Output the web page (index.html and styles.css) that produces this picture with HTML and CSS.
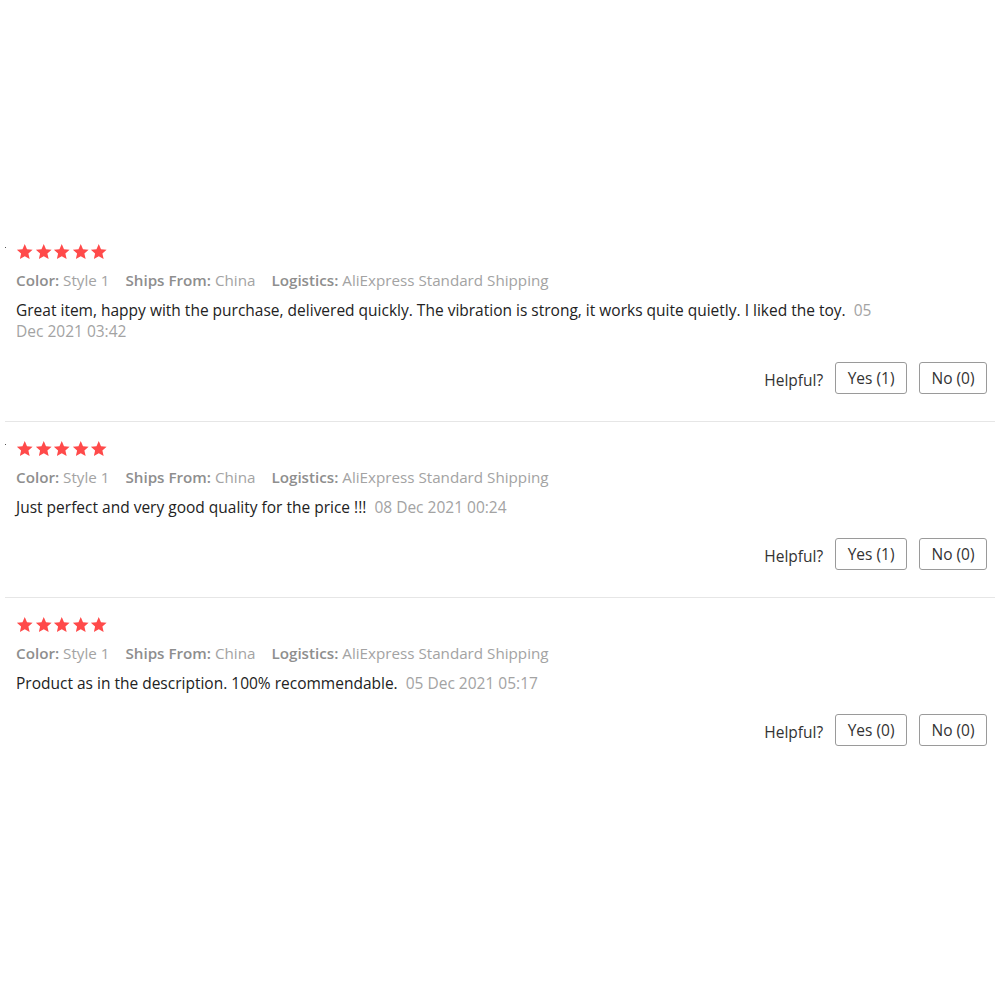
FILE: index.html
```html
<!DOCTYPE html>
<html lang="en">
<head>
    <meta charset="UTF-8">
    <meta name="viewport" content="width=device-width, initial-scale=1.0">
    <title>Reviews</title>
    <link rel="stylesheet" href="styles.css">
</head>
<body>
    <svg width="0" height="0" class="defs">
        <symbol id="star" viewBox="0 0 24 24">
            <polygon points="12,1.5 15.1,8.6 22.8,9.3 17,14.4 18.7,22 12,18 5.3,22 7,14.4 1.2,9.3 8.9,8.6"/>
        </symbol>
    </svg>
    <div class="reviews">
        <div class="review">
            <span class="dot"></span>
            <div class="stars">
                <svg><use href="#star"/></svg><svg><use href="#star"/></svg><svg><use href="#star"/></svg><svg><use href="#star"/></svg><svg><use href="#star"/></svg>
            </div>
            <div class="meta">
                <span><b>Color:</b> Style 1</span>
                <span><b>Ships From:</b> China</span>
                <span><b>Logistics:</b> AliExpress Standard Shipping</span>
            </div>
            <p class="text">Great item, happy with the purchase, delivered quickly. The vibration is strong, it works quite quietly. I liked the toy. <span class="date">05 Dec 2021 03:42</span></p>
            <div class="helpful">
                <span>Helpful?</span>
                <button>Yes (1)</button>
                <button>No (0)</button>
            </div>
        </div>

        <div class="review">
            <span class="dot"></span>
            <div class="stars">
                <svg><use href="#star"/></svg><svg><use href="#star"/></svg><svg><use href="#star"/></svg><svg><use href="#star"/></svg><svg><use href="#star"/></svg>
            </div>
            <div class="meta">
                <span><b>Color:</b> Style 1</span>
                <span><b>Ships From:</b> China</span>
                <span><b>Logistics:</b> AliExpress Standard Shipping</span>
            </div>
            <p class="text">Just perfect and very good quality for the price !!! <span class="date">08 Dec 2021 00:24</span></p>
            <div class="helpful">
                <span>Helpful?</span>
                <button>Yes (1)</button>
                <button>No (0)</button>
            </div>
        </div>

        <div class="review last">
            <div class="stars">
                <svg><use href="#star"/></svg><svg><use href="#star"/></svg><svg><use href="#star"/></svg><svg><use href="#star"/></svg><svg><use href="#star"/></svg>
            </div>
            <div class="meta">
                <span><b>Color:</b> Style 1</span>
                <span><b>Ships From:</b> China</span>
                <span><b>Logistics:</b> AliExpress Standard Shipping</span>
            </div>
            <p class="text">Product as in the description. 100% recommendable. <span class="date">05 Dec 2021 05:17</span></p>
            <div class="helpful">
                <span>Helpful?</span>
                <button>Yes (0)</button>
                <button>No (0)</button>
            </div>
        </div>
    </div>
</body>
</html>
```

FILE: styles.css
```css
body {
    margin: 0;
    background-color: #ffffff;
    font-family: "Open Sans", Arial, sans-serif;
    color: #222222;
}

.defs {
    position: absolute;
}

.reviews {
    padding-top: 225px;
    margin: 0 7px 0 5px;
}

.review {
    position: relative;
    padding: 18px 8px 27px 11px;
    border-bottom: 1px solid #e6e6e6;
}

.review.last {
    border-bottom: none;
}

.dot {
    position: absolute;
    left: 0;
    top: 22px;
    width: 1px;
    height: 1px;
    background-color: #555555;
}

.stars {
    display: flex;
    gap: 1px;
    height: 18px;
    align-items: center;
}

.stars svg {
    width: 17.5px;
    height: 17.5px;
    fill: #ff4a4a;
}

.meta {
    margin-top: 9px;
    display: flex;
    gap: 16px;
    font-size: 15.2px;
    line-height: 20px;
    color: #a3a3a3;
}

.meta b {
    font-weight: 600;
    color: #8e8e8e;
}

.text {
    margin: 10px 0 0 0;
    max-width: 864px;
    font-size: 15.5px;
    line-height: 21px;
}

.date {
    margin-left: 4px;
    color: #a3a3a3;
}

.helpful {
    margin-top: 20px;
    display: flex;
    justify-content: flex-end;
    align-items: center;
    gap: 12px;
    font-size: 15.5px;
    color: #333333;
}

.helpful span {
    margin-top: 4px;
}

.helpful button {
    height: 32px;
    padding: 0 11.5px;
    background-color: #ffffff;
    border: 1px solid #9a9a9a;
    border-radius: 3px;
    font-family: "Open Sans", Arial, sans-serif;
    font-size: 15.5px;
    color: #333333;
}
```
